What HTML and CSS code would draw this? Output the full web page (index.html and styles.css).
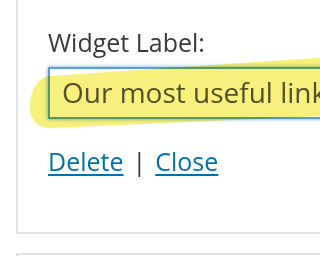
FILE: index.html
```html
<!DOCTYPE html>
<html>
<head>
<meta charset="utf-8">
<link rel="stylesheet" href="styles.css">
</head>
<body>
<div class="wrap">
  <div class="panel">
    <label class="label">Widget Label:</label>
    <div class="field">Our most useful links</div>
    <div class="actions">
      <a class="link" href="#">Delete</a>
      <span class="sep">|</span>
      <a class="link" href="#">Close</a>
    </div>
  </div>
  <div class="panel next"></div>
  <svg class="marker" width="420" height="256" viewBox="0 0 420 256">
    <path d="M50 76 L256 62 L420 51 L420 112 L256 119 L52 128 C36 129 29 118 30 104 C31 90 38 77 50 76 Z" fill="#f8f07c"/>
  </svg>
</div>
</body>
</html>
```
FILE: styles.css
```css
html, body {
  margin: 0;
  padding: 0;
  background: #fff;
  overflow: hidden;
}
.wrap {
  position: relative;
  min-width: 256px;
  height: 256px;
  overflow: hidden;
  padding-left: 16px;
  box-sizing: border-box;
  font-family: "Open Sans", "Noto Sans", sans-serif;
}
.panel {
  height: 234px;
  box-sizing: border-box;
  border-left: 2px solid #e3e3e3;
  border-bottom: 2px solid #e3e3e3;
  padding: 27px 0 0 30px;
  display: flex;
  flex-direction: column;
}
.panel.next {
  margin-top: 19px;
  height: 20px;
  border-top: 2px solid #e3e3e3;
  border-bottom: none;
  padding: 0;
}
.label {
  font-size: 25px;
  line-height: 30px;
  color: #3a3a3a;
}
.field {
  margin-top: 10px;
  margin-right: -200px;
  height: 52px;
  box-sizing: border-box;
  border: 2px solid #5b9dd9;
  box-shadow: 0 0 4px rgba(30, 140, 190, 0.7);
  padding: 0 0 2px 12px;
  font-size: 28px;
  line-height: 46px;
  color: #555;
  white-space: nowrap;
  overflow: hidden;
}
.actions {
  margin-top: 27px;
  font-size: 25px;
  line-height: 30px;
  color: #444;
  display: flex;
  gap: 9px;
  align-items: baseline;
}
.link {
  color: #0073aa;
  text-decoration: underline;
  text-decoration-thickness: 2px;
  text-underline-offset: 3px;
}
.sep {
  color: #333;
}
.marker {
  position: absolute;
  left: 0;
  top: 0;
  mix-blend-mode: multiply;
  pointer-events: none;
}
```
